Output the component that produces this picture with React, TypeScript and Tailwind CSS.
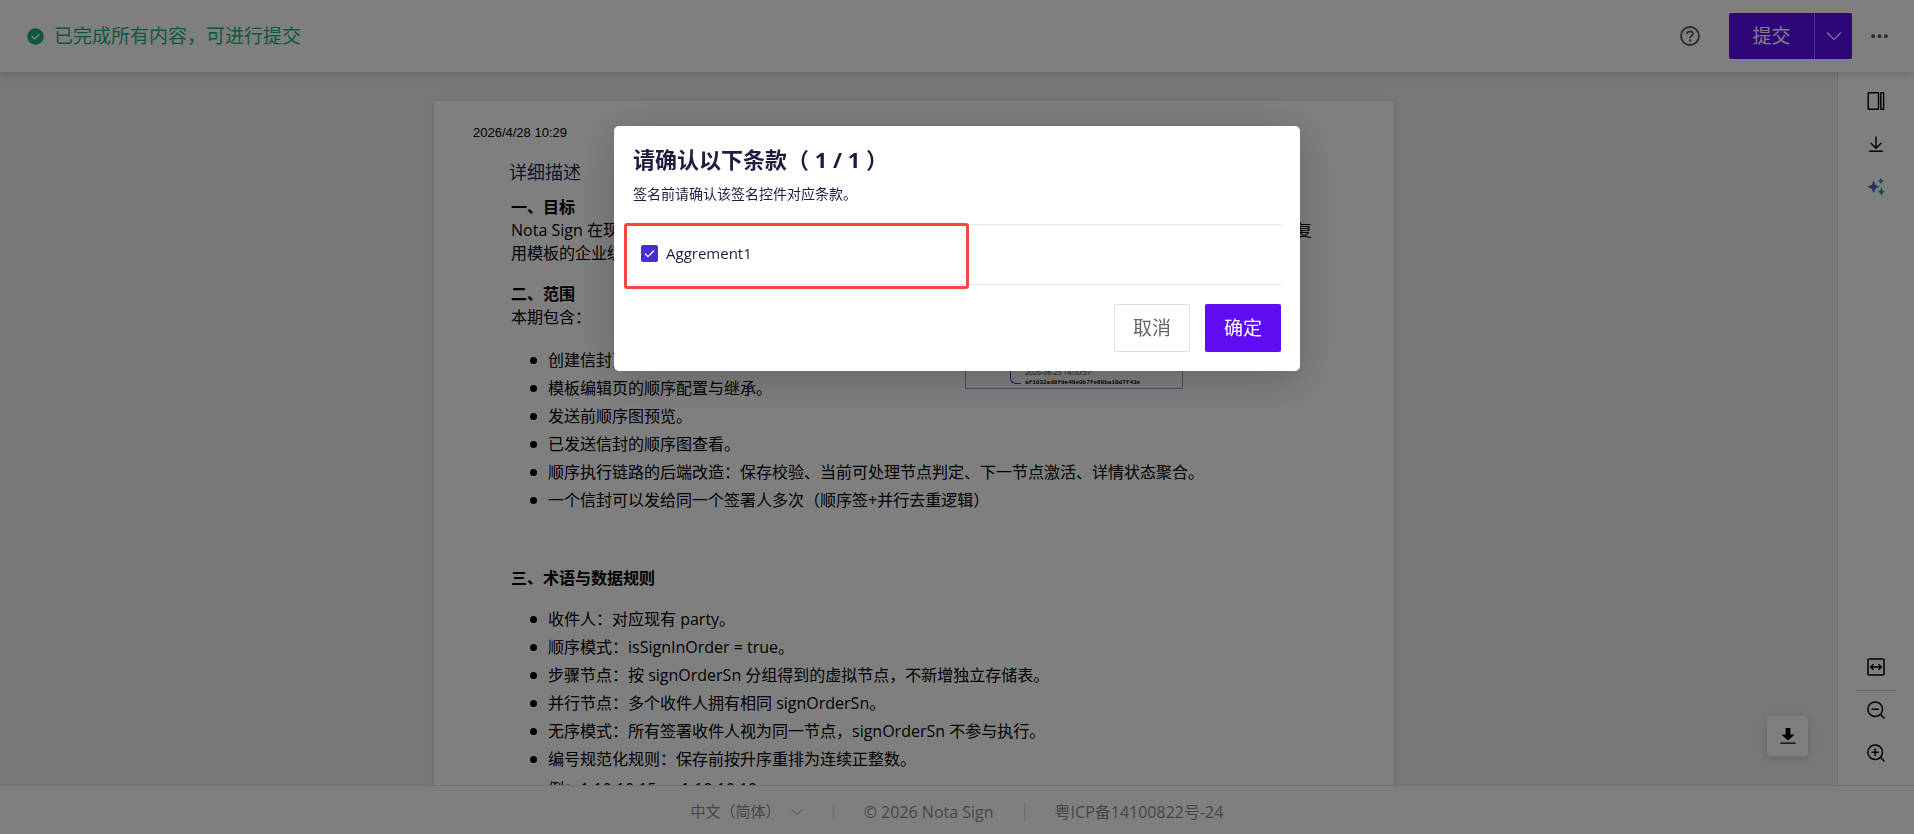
import type { ReactNode } from 'react';

const scopeItems = [
  '创建信封页',
  '模板编辑页的顺序配置与继承。',
  '发送前顺序图预览。',
  '已发送信封的顺序图查看。',
  '顺序执行链路的后端改造：保存校验、当前可处理节点判定、下一节点激活、详情状态聚合。',
  '一个信封可以发给同一个签署人多次（顺序签+并行去重逻辑）',
];

const termItems = [
  '收件人：对应现有 party。',
  '顺序模式：isSignInOrder = true。',
  '步骤节点：按 signOrderSn 分组得到的虚拟节点，不新增独立存储表。',
  '并行节点：多个收件人拥有相同 signOrderSn。',
  '无序模式：所有签署收件人视为同一节点，signOrderSn 不参与执行。',
  '编号规范化规则：保存前按升序重排为连续正整数。',
];

function ChevronDown({ className }: { className?: string }) {
  return (
    <svg viewBox="0 0 16 16" className={className} fill="none" stroke="currentColor" strokeWidth="1.2">
      <path d="M1 4.5l7 7 7-7" />
    </svg>
  );
}

function IconButton({ label, children }: { label: string; children: ReactNode }) {
  return (
    <button type="button" aria-label={label} className="flex h-[43px] w-10 items-center justify-center text-black">
      {children}
    </button>
  );
}

function Header() {
  return (
    <header className="relative z-10 flex h-[72px] shrink-0 items-center bg-white pl-[27px] pr-[26px] shadow-[0_2px_8px_rgba(0,0,0,0.15)]">
      <svg viewBox="0 0 17 17" className="h-[17px] w-[17px]">
        <circle cx="8.5" cy="8.5" r="8.3" fill="#1fae7a" />
        <path d="M4.8 8.4l2.7 2.6 4.8-4.8" fill="none" stroke="#fff" strokeWidth="1.6" />
      </svg>
      <p className="ml-2.5 text-[19px] leading-7 text-[#1fae7a]">已完成所有内容，可进行提交</p>
      <div className="ml-auto flex items-center">
        <button type="button" aria-label="帮助" className="mr-[29px] text-[#555]">
          <svg viewBox="0 0 20 20" className="h-5 w-5" fill="none" stroke="currentColor" strokeWidth="1.8">
            <circle cx="10" cy="10" r="9" />
            <path d="M7.1 8.1c0-1.7 1.2-2.8 2.9-2.8s2.9 1.1 2.9 2.6c0 2-2.9 2.2-2.9 4.3" />
            <path d="M10 13.6v1.9" strokeWidth="2" />
          </svg>
        </button>
        <div className="flex h-[46px] overflow-hidden rounded-xs bg-[#5e0df2] text-white">
          <button type="button" className="w-[85px] text-[19px]">提交</button>
          <button type="button" aria-label="更多提交方式" className="flex w-[38px] items-center justify-center border-l border-white/40">
            <ChevronDown className="h-4 w-4" />
          </button>
        </div>
        <button type="button" aria-label="更多" className="ml-[19px] text-[#555]">
          <svg viewBox="0 0 17 17" className="h-[17px] w-[17px]" fill="currentColor">
            <circle cx="2.2" cy="8.2" r="1.9" />
            <circle cx="8.5" cy="8.2" r="1.9" />
            <circle cx="14.8" cy="8.2" r="1.9" />
          </svg>
        </button>
      </div>
    </header>
  );
}

function BulletList({ items }: { items: string[] }) {
  return (
    <ul>
      {items.map((item) => (
        <li key={item} className="flex items-center leading-7">
          <span className="mr-[11px] h-[7px] w-[7px] rounded-full bg-black" />
          {item}
        </li>
      ))}
    </ul>
  );
}

function DocumentPage() {
  return (
    <article className="relative h-[1358px] w-[960px] shrink-0 bg-white pl-[77px] pr-[82px] pt-[22px] text-base leading-[23px] text-black shadow-[0_0_6px_rgba(0,0,0,0.12)]">
      <time className="-ml-[38px] block font-[Liberation_Sans] text-[13px] leading-5">2026/4/28 10:29</time>
      <h1 className="-ml-0.5 mt-[15px] text-lg leading-7 text-[#1d2b55]">详细描述</h1>
      <h2 className="mt-[10px] font-bold">一、目标</h2>
      <p className="flex justify-between">
        <span>Nota Sign 在现</span>
        <span>复</span>
      </p>
      <p>用模板的企业级</p>
      <h2 className="mt-[18px] font-bold">二、范围</h2>
      <p>本期包含：</p>
      <div className="mt-[17px] pl-[19px]">
        <BulletList items={scopeItems} />
      </div>
      <h2 className="mt-[53px] font-bold">三、术语与数据规则</h2>
      <div className="mt-[15px] pl-[19px]">
        <BulletList items={termItems} />
        <p className="mt-0.5 pl-[18px] leading-7">例：1,10,10,15 → 1,10,10,10</p>
      </div>
      <Signature />
    </article>
  );
}

function Signature() {
  return (
    <div className="absolute left-[531px] top-[188px] flex h-[100px] w-[218px] items-end border border-[#b48cf0] pl-11">
      <span className="mb-1 h-16 w-[11px] rounded-l-md border border-r-0 border-[#6a2bd9]" />
      <div className="ml-1 leading-[10px] text-[#222]">
        <p className="text-[7px]">2026-06-25 14:00:57</p>
        <p className="font-[Liberation_Mono] text-[6px] font-bold text-black">af1032ad0f9e49e0b7fe69ba10d7f43e</p>
      </div>
    </div>
  );
}

function Sidebar() {
  return (
    <aside className="flex w-[77px] shrink-0 flex-col items-center border-l border-[#e0e0e0] bg-white pb-[11px] pt-[7px]">
      <IconButton label="页面面板">
        <svg viewBox="0 0 18 18" className="h-[18px] w-[18px]" fill="none" stroke="currentColor" strokeWidth="1.4">
          <rect x="1.2" y="0.7" width="10.3" height="16.6" rx="0.6" />
          <rect x="13.8" y="0.7" width="2.8" height="16.6" rx="0.4" />
        </svg>
      </IconButton>
      <IconButton label="下载">
        <svg viewBox="0 0 18 18" className="h-[18px] w-[18px]" fill="none" stroke="currentColor" strokeWidth="1.4">
          <path d="M9 1.5V13M3.7 8l5.3 5.3L14.3 8M2.3 16.3h13.4" />
        </svg>
      </IconButton>
      <IconButton label="智能助手">
        <svg viewBox="0 0 18 18" className="h-[18px] w-[18px]">
          <defs>
            <linearGradient id="spark" x1="0" x2="1">
              <stop offset="0" stopColor="#5b3fe0" />
              <stop offset="1" stopColor="#3d86c6" />
            </linearGradient>
          </defs>
          <path d="M6.6 2.6l1.9 4.3 4.2 1.9-4.2 1.9-1.9 4.6-1.9-4.6L.5 8.8l4.2-1.9z" fill="url(#spark)" />
          <path d="M13.8 0l1.1 2 2.1 1-2.1 1-1.1 2.1L12.7 4l-2.1-1 2.1-1z" fill="#2496a8" />
          <path d="M14.4 9.6l1.3 2.8 2.3 1.3-2.3 1.3-1.3 2.8-1.3-2.8-2.5-1.3 2.5-1.3z" fill="#1aa08c" />
        </svg>
      </IconButton>
      <div className="mt-auto flex flex-col items-center">
        <IconButton label="适合宽度">
          <svg viewBox="0 0 18 18" className="h-[18px] w-[18px]" fill="none" stroke="currentColor" strokeWidth="1.5">
            <rect x="1" y="1" width="16" height="16" rx="1" />
            <path d="M4 9h10M6.5 6.3L3.8 9l2.7 2.7M11.5 6.3L14.2 9l-2.7 2.7" />
          </svg>
        </IconButton>
        <span className="-mb-[3px] mt-0.5 h-px w-10 bg-[#c8c8c8]" />
        <IconButton label="缩小">
          <svg viewBox="0 0 18 18" className="h-[18px] w-[18px]" fill="none" stroke="currentColor" strokeWidth="1.5">
            <circle cx="8.2" cy="8.2" r="7.3" />
            <path d="M13.3 13.3l4.2 4.2M4.5 8.2h7.4" />
          </svg>
        </IconButton>
        <IconButton label="放大">
          <svg viewBox="0 0 18 18" className="h-[18px] w-[18px]" fill="none" stroke="currentColor" strokeWidth="1.5">
            <circle cx="8.2" cy="8.2" r="7.3" />
            <path d="M13.3 13.3l4.2 4.2M4.5 8.2h7.4M8.2 4.5v7.4" />
          </svg>
        </IconButton>
      </div>
    </aside>
  );
}

function Footer() {
  return (
    <footer className="flex h-[49px] shrink-0 items-center justify-center border-t border-[#e4e4e4] bg-white pt-[3px] text-base text-[#8c8c8c]">
      <button type="button" className="flex items-center gap-2.5 text-[15px]">
        中文（简体）
        <ChevronDown className="h-3 w-3" />
      </button>
      <span className="mx-[30px] h-[18px] w-px bg-[#dadada]" />
      <span>© 2026 Nota Sign</span>
      <span className="mx-[30px] h-[18px] w-px bg-[#dadada]" />
      <a href="#icp">粤ICP备14100822号-24</a>
    </footer>
  );
}

function ConfirmDialog() {
  return (
    <div className="fixed inset-0 z-20 flex items-start justify-center bg-black/50 pt-[126px]">
      <div
        role="dialog"
        aria-modal="true"
        aria-labelledby="dialog-title"
        className="relative w-[686px] rounded-[5px] bg-white px-[19px] pb-[19px] pt-[15px] text-[#221b3f] shadow-[0_8px_40px_rgba(0,0,0,0.22)]"
      >
        <h2 id="dialog-title" className="text-[22px] font-bold leading-9">请确认以下条款（ 1 / 1 ）</h2>
        <p className="mt-[5px] text-sm leading-6">签名前请确认该签名控件对应条款。</p>
        <div className="mt-[18px] border-y border-[#e6e6f0] px-2 pb-[19px] pt-4">
          <label className="flex items-center gap-2 text-[15px] leading-6">
            <span className="relative flex h-[17px] w-[17px]">
              <input
                type="checkbox"
                defaultChecked
                className="peer h-[17px] w-[17px] appearance-none rounded-xs border border-[#4a2bd2] checked:bg-[#4a2bd2]"
              />
              <svg viewBox="0 0 17 17" className="pointer-events-none absolute inset-0 hidden peer-checked:block" fill="none" stroke="#fff" strokeWidth="1.2">
                <path d="M4 8.5l3 3.2 6-6.2" />
              </svg>
            </span>
            Aggrement1
          </label>
        </div>
        <div className="mt-[19px] flex justify-end gap-[15px]">
          <button type="button" className="h-12 w-[76px] rounded-xs border border-[#dcdce6] text-[19px] text-[#666]">取消</button>
          <button type="button" className="h-12 w-[76px] rounded-xs bg-[#5e0df2] text-[19px] text-white">确定</button>
        </div>
        <span className="pointer-events-none absolute left-2.5 top-[97px] h-[66px] w-[345px] rounded-[3px] border-3 border-[#f04a3e]" />
      </div>
    </div>
  );
}

export default function App() {
  return (
    <div className="flex h-screen flex-col overflow-hidden font-['Open_Sans','Noto_Sans_CJK_SC',sans-serif]">
      <Header />
      <div className="flex min-h-0 flex-1">
        <main className="relative flex min-w-0 flex-1 items-start justify-center overflow-hidden bg-[#f0f0f0] pr-[9px] pt-[29px]">
          <DocumentPage />
          <button
            type="button"
            aria-label="下载文件"
            className="absolute bottom-[29px] right-[29px] flex h-10 w-[41px] items-center justify-center rounded-sm bg-white text-black shadow-[0_2px_10px_rgba(0,0,0,0.15)]"
          >
            <svg viewBox="0 0 16 16" className="h-4 w-4" fill="currentColor">
              <path d="M5.6 0h4.8v6.5h4.3L8 12.6 1.3 6.5h4.3zM.3 14.6h15.4v1.2H.3z" />
            </svg>
          </button>
        </main>
        <Sidebar />
      </div>
      <Footer />
      <ConfirmDialog />
    </div>
  );
}
